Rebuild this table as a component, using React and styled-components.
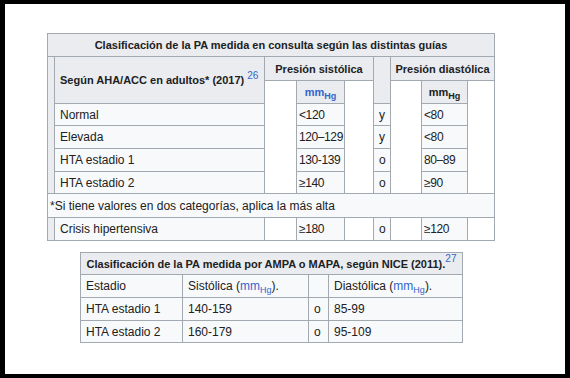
import React from 'react'
import styled, { createGlobalStyle } from 'styled-components'

const Global = createGlobalStyle`
  html, body { margin: 0; padding: 0; background: #fff; }
  body { font-family: "Liberation Sans", Arial, sans-serif; color: #202122; }
`;

const Frame = styled.div`
  box-sizing: border-box;
  width: 570px;
  height: 378px;
  border: solid #000;
  border-width: 4px 5px 4px 5px;
  background: #fff;
  padding: 29px 0 0 42px;
  display: flex;
  flex-direction: column;
  align-items: flex-start;
  gap: 11px;
`;

const Grid = styled.div`
  display: grid;
  grid-template-columns: ${p => p.$cols};
  grid-template-rows: ${p => p.$rows};
  border-top: 1px solid #a2a9b1;
  border-left: 1px solid #a2a9b1;
  background: #f8f9fa;
  margin-left: ${p => p.$indent || 0}px;
`;

const Cell = styled.div`
  grid-column: ${p => p.$c};
  grid-row: ${p => p.$r || 'auto'};
  box-sizing: border-box;
  border-right: 1px solid #a2a9b1;
  border-bottom: 1px solid #a2a9b1;
  background: #f8f9fa;
  display: flex;
  align-items: center;
  justify-content: ${p => (p.$center ? 'center' : 'flex-start')};
  padding: 0 ${p => p.$pad ?? 5}px;
  font-size: 12px;
  white-space: nowrap;
`;

const ValueCell = styled(Cell)`
  padding: 0 2px;
  letter-spacing: -0.4px;
`;

const HeadCell = styled(Cell)`
  background: #eaecf0;
  font-weight: 700;
  font-size: 11px;
`;

const BlankCell = styled(Cell)`
  background: #fff;
`;

const Stripe = styled(Cell)`
  background: #eaecf0;
  padding: 0;
`;

const Line = styled.span`
  line-height: 14px;
`;

const Link = styled.span`
  color: ${p => (p.$plain ? '#202122' : '#3366cc')};
`;

const Sub = styled.sub`
  font-size: 9px;
  vertical-align: -3px;
  line-height: 0;
`;

const Sup = styled.sup`
  color: #3366cc;
  font-size: 10px;
  font-weight: 400;
  vertical-align: ${p => p.$rise}px;
  line-height: 0;
  margin-left: ${p => p.$gap || 0}px;
`;

function Unit({ plain }) {
  return (
    <Link $plain={plain}>
      mm<Sub>Hg</Sub>
    </Link>
  );
}

const rows1 = [
  { label: 'Normal', sys: '<120', op: 'y', dia: '<80', r: 4 },
  { label: 'Elevada', sys: '120–129', op: 'y', dia: '<80', r: 5 },
  { label: 'HTA estadio 1', sys: '130-139', op: 'o', dia: '80–89', r: 6 },
  { label: 'HTA estadio 2', sys: '≥140', op: 'o', dia: '≥90', r: 7 },
];

function ConsultaTable() {
  return (
    <Grid
      $cols="7px 210px 32px 48px 29px 17px 31px 46px 27px"
      $rows="23px 24px 23px 22px 23px 23px 22px 24px 23px"
    >
      <HeadCell $c="1 / -1" $r="1" $center>
        Clasificación de la PA medida en consulta según las distintas guías
      </HeadCell>

      <Stripe $c="1" $r="2 / span 6" />
      <HeadCell $c="2" $r="2 / span 2">
        <Line>
          Según AHA/ACC en adultos* (2017)<Sup $gap={3} $rise={5}>26</Sup>
        </Line>
      </HeadCell>
      <HeadCell $c="3 / span 3" $r="2" $center>Presión sistólica</HeadCell>
      <HeadCell $c="6" $r="2 / span 2" />
      <HeadCell $c="7 / span 3" $r="2" $center>Presión diastólica</HeadCell>

      <BlankCell $c="3" $r="3 / span 5" />
      <HeadCell $c="4" $r="3" $center><Unit /></HeadCell>
      <BlankCell $c="5" $r="3 / span 5" />
      <BlankCell $c="7" $r="3 / span 5" />
      <HeadCell $c="8" $r="3" $center><Unit plain /></HeadCell>
      <BlankCell $c="9" $r="3 / span 5" />

      {rows1.map(row => (
        <React.Fragment key={row.label}>
          <Cell $c="2" $r={row.r}>{row.label}</Cell>
          <ValueCell $c="4" $r={row.r}>{row.sys}</ValueCell>
          <Cell $c="6" $r={row.r}>{row.op}</Cell>
          <ValueCell $c="8" $r={row.r}>{row.dia}</ValueCell>
        </React.Fragment>
      ))}

      <Cell $c="1 / -1" $r="8" $pad={2}>
        *Si tiene valores en dos categorías, aplica la más alta
      </Cell>

      <Stripe $c="1" $r="9" />
      <Cell $c="2" $r="9">Crisis hipertensiva</Cell>
      <BlankCell $c="3" $r="9" />
      <ValueCell $c="4" $r="9">≥180</ValueCell>
      <BlankCell $c="5" $r="9" />
      <Cell $c="6" $r="9">o</Cell>
      <BlankCell $c="7" $r="9" />
      <ValueCell $c="8" $r="9">≥120</ValueCell>
      <BlankCell $c="9" $r="9" />
    </Grid>
  );
}

const rows2 = [
  { label: 'HTA estadio 1', sys: '140-159', dia: '85-99' },
  { label: 'HTA estadio 2', sys: '160-179', dia: '95-109' },
];

function NiceTable() {
  return (
    <Grid $indent={33} $cols="102px 126px 20px 134px" $rows="22px 23px 23px 22px">
      <HeadCell $c="1 / -1" $center>
        <Line>
          Clasificación de la PA medida por AMPA o MAPA, según NICE (2011).<Sup $rise={6}>27</Sup>
        </Line>
      </HeadCell>
      <Cell $c="1">Estadio</Cell>
      <Cell $c="2"><Line>Sistólica (<Unit />).</Line></Cell>
      <Cell $c="3" />
      <Cell $c="4"><Line>Diastólica (<Unit />).</Line></Cell>
      {rows2.map(row => (
        <React.Fragment key={row.label}>
          <Cell $c="1">{row.label}</Cell>
          <Cell $c="2">{row.sys}</Cell>
          <Cell $c="3">o</Cell>
          <Cell $c="4">{row.dia}</Cell>
        </React.Fragment>
      ))}
    </Grid>
  );
}

export default function App() {
  return (
    <>
      <Global />
      <Frame>
        <ConsultaTable />
        <NiceTable />
      </Frame>
    </>
  );
}
